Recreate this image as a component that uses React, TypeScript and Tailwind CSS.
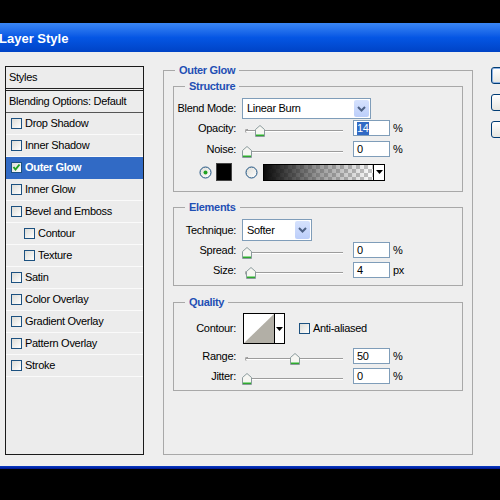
import React from "react";

const styleRows = [
  { label: "Drop Shadow" },
  { label: "Inner Shadow" },
  { label: "Outer Glow", checked: true, active: true },
  { label: "Inner Glow" },
  { label: "Bevel and Emboss" },
  { label: "Contour", indent: true },
  { label: "Texture", indent: true },
  { label: "Satin" },
  { label: "Color Overlay" },
  { label: "Gradient Overlay" },
  { label: "Pattern Overlay" },
  { label: "Stroke" },
];

function CheckBox({ checked = false }: { checked?: boolean }) {
  return (
    <div className="w-[11px] h-[11px] shrink-0 border border-[#1c5180] bg-linear-to-br from-[#dcdcd7] to-white flex items-center justify-center">
      {checked && (
        <svg width="9" height="9" viewBox="0 0 9 9">
          <path d="M1.5 4 L3.5 6.5 L7.5 1.5" fill="none" stroke="#21a121" strokeWidth="2" />
        </svg>
      )}
    </div>
  );
}

function Radio({ on = false }: { on?: boolean }) {
  return (
    <svg width="13" height="13" viewBox="0 0 13 13" className="shrink-0">
      <defs>
        <linearGradient id="rg" x1="0" y1="0" x2="1" y2="1">
          <stop offset="0" stopColor="#dcdcd7" />
          <stop offset="1" stopColor="#ffffff" />
        </linearGradient>
      </defs>
      <circle cx="6.5" cy="6.5" r="5.5" fill="url(#rg)" stroke="#1c5180" />
      {on && <circle cx="6.5" cy="6.5" r="2" fill="#21a121" />}
    </svg>
  );
}

function Thumb() {
  return (
    <svg width="10" height="12" viewBox="0 0 10 12">
      <path d="M0.5 4.5 L5 0.5 L9.5 4.5 V11.5 H0.5 Z" fill="#f6f6f2" stroke="#8a9a9c" />
      <path d="M1 9.5 H9" stroke="#8fd88f" />
      <path d="M1 10.5 H9" stroke="#2fa82f" />
    </svg>
  );
}

// pos = thumb centre, px from track start
function Slider({ pos }: { pos: number }) {
  return (
    <div className="relative w-[105px] h-full shrink-0">
      <div className="absolute left-[4px] top-[11px] w-[97px] h-[2px] border-t border-[#9c9c9c] border-b border-b-white" />
      <div className="absolute left-[3px] top-[10px] w-[3px] h-[4px] rounded-l-full border-l border-t border-[#9c9c9c]" />
      <div className="absolute top-[6px]" style={{ left: 4 + pos - 5 }}>
        <Thumb />
      </div>
    </div>
  );
}

function NumBox({ value, unit, selected = false }: { value: string; unit: string; selected?: boolean }) {
  return (
    <>
      <div className="ml-[6px] w-[37px] h-[16px] shrink-0 border border-[#7f9db9] bg-white flex items-center pl-[3px]">
        {selected ? <span className="bg-[#316ac5] text-white leading-[13px]">{value}</span> : value}
      </div>
      <span className="ml-[3px]">{unit}</span>
    </>
  );
}

function Label({ children }: { children: React.ReactNode }) {
  return <div className="w-[63px] shrink-0 text-right pr-[1px] mr-[5px] whitespace-nowrap">{children}</div>;
}

function SliderRow({ label, pos, value, unit, selected, className = "" }: { label: string; pos: number; value: string; unit: string; selected?: boolean; className?: string }) {
  return (
    <div className={`flex items-center h-[18px] ${className}`}>
      <Label>{label}:</Label>
      <Slider pos={pos} />
      <NumBox value={value} unit={unit} selected={selected} />
    </div>
  );
}

function Select({ value, width, height }: { value: string; width: string; height: string }) {
  return (
    <div className={`${width} ${height} shrink-0 border border-[#7f9db9] bg-white flex items-center`}>
      <span className="flex-1 pl-[4px]">{value}</span>
      <div className="w-[15px] h-[calc(100%-2px)] mr-[1px] rounded-[2px] bg-linear-to-b from-[#d6e2fd] to-[#bccefa] flex items-center justify-center">
        <svg width="9" height="6" viewBox="0 0 9 6">
          <path d="M1 1 L4.5 4.5 L8 1" fill="none" stroke="#4d6185" strokeWidth="2" />
        </svg>
      </div>
    </div>
  );
}

function Group({ title, className = "", legendClass = "ml-[11px]", children }: { title: string; className?: string; legendClass?: string; children: React.ReactNode }) {
  return (
    <fieldset className={`border border-[#a8a8a8] ${className}`}>
      <legend className={`${legendClass} px-[4px] leading-[14px] font-bold text-[#1f4fb4]`}>{title}</legend>
      {children}
    </fieldset>
  );
}

function DropArrow() {
  return (
    <svg width="7" height="4" viewBox="0 0 7 4">
      <path d="M0 0 H7 L3.5 4 Z" fill="#000" />
    </svg>
  );
}

export default function App() {
  return (
    <div className="w-[500px] h-[500px] bg-black overflow-hidden flex flex-col font-['Liberation_Sans',Arial,sans-serif] text-[11px] tracking-[-0.3px] text-black">
      <div className="h-[23px] shrink-0" />

      {/* title bar */}
      <div className="h-[29px] shrink-0 bg-linear-to-b from-[#3a86f4] via-[#0556e4] to-[#0043c6] flex items-center pt-[2px]">
        <span className="text-white font-bold text-[13px] tracking-normal -ml-[1px]">Layer Style</span>
      </div>

      {/* dialog body */}
      <div className="h-[414px] shrink-0 bg-[#eeeeee] flex items-start">
        {/* styles list */}
        <div className="ml-[5px] mt-[14px] w-[139px] h-[389px] shrink-0 border border-[#1a1a1a] bg-[#ececec] flex flex-col whitespace-nowrap">
          <div className="h-[24px] border-b-[3px] border-double border-[#222] flex items-center pl-[3px]">Styles</div>
          <div className="h-[22px] border-b border-[#555] flex items-center pl-[3px]">Blending Options: Default</div>
          {styleRows.map((r) => (
            <div
              key={r.label}
              className={`h-[22px] border-b flex items-center gap-[3px] ${r.indent ? "pl-[18px]" : "pl-[5px]"} ${
                r.active ? "bg-[#316ac5] border-[#316ac5] text-white font-bold" : "border-[#fafafa]"
              }`}
            >
              <CheckBox checked={r.checked} />
              <span>{r.label}</span>
            </div>
          ))}
        </div>

        {/* Outer Glow panel */}
        <Group title="Outer Glow" legendClass="ml-[2px]" className="ml-[19px] mt-[11px] w-[310px] h-[392px] shrink-0 px-[9px]">
          <Group title="Structure" className="mt-[2px] pt-[5px] pb-[9px]">
            <div className="flex items-center h-[21px]">
              <Label>Blend Mode:</Label>
              <Select value="Linear Burn" width="w-[129px]" height="h-[21px]" />
            </div>
            <SliderRow label="Opacity" pos={14} value="14" unit="%" selected />
            <SliderRow label="Noise" pos={1} value="0" unit="%" className="mt-[3px]" />
            <div className="flex items-center h-[20px] mt-[4px] pl-[25px]">
              <Radio on />
              <div className="ml-[4px] w-[16px] h-[18px] bg-black border border-[#444]" />
              <div className="ml-[13px]">
                <Radio />
              </div>
              <div className="ml-[5px] w-[122px] h-[17px] border border-black flex">
                <div className="flex-1 bg-[repeating-conic-gradient(#c4c4c4_0_25%,#ffffff_0_50%)] bg-[length:8px_8px]">
                  <div className="w-full h-full bg-linear-to-r from-[#0a0a0a] via-[#555]/60 to-transparent" />
                </div>
                <div className="w-[11px] border-l border-black bg-white flex items-center justify-center">
                  <DropArrow />
                </div>
              </div>
            </div>
          </Group>

          <Group title="Elements" className="mt-[8px] pt-[5px] pb-[6px]">
            <div className="flex items-center h-[22px]">
              <Label>Technique:</Label>
              <Select value="Softer" width="w-[70px]" height="h-[22px]" />
            </div>
            <SliderRow label="Spread" pos={1} value="0" unit="%" />
            <SliderRow label="Size" pos={5} value="4" unit="px" className="mt-[2px]" />
          </Group>

          <Group title="Quality" className="mt-[9px] pt-[4px] pb-[5px]">
            <div className="flex items-center h-[31px]">
              <Label>Contour:</Label>
              <div className="ml-[1px] w-[42px] h-[31px] shrink-0 border border-black flex">
                <svg width="30" height="29" viewBox="0 0 30 29" className="bg-white">
                  <polygon points="0,29 30,0 30,29" fill="#b2afa6" />
                </svg>
                <div className="flex-1 border-l border-black bg-white flex items-center justify-center">
                  <DropArrow />
                </div>
              </div>
              <div className="ml-[14px]">
                <CheckBox />
              </div>
              <span className="ml-[3px]">Anti-aliased</span>
            </div>
            <SliderRow label="Range" pos={49} value="50" unit="%" className="mt-[3px]" />
            <SliderRow label="Jitter" pos={1} value="0" unit="%" className="mt-[2px]" />
          </Group>
        </Group>

        {/* buttons, cut off at the right */}
        <div className="ml-[18px] mt-[15px] flex flex-col gap-[10px] shrink-0">
          <div className="w-[75px] h-[17px] rounded-[3px] border border-[#003c74] bg-linear-to-b from-white to-[#e6e6e0] shadow-[inset_0_0_0_1px_#8db2e3] flex items-center justify-center">OK</div>
          <div className="w-[75px] h-[17px] rounded-[3px] border border-[#003c74] bg-linear-to-b from-white to-[#e6e6e0] flex items-center justify-center">Cancel</div>
          <div className="w-[75px] h-[17px] rounded-[3px] border border-[#003c74] bg-linear-to-b from-white to-[#e6e6e0] flex items-center justify-center">New Style...</div>
        </div>
      </div>

      <div className="h-[3px] shrink-0 bg-linear-to-b from-[#0a3cc8] to-[#00138c]" />
    </div>
  );
}
